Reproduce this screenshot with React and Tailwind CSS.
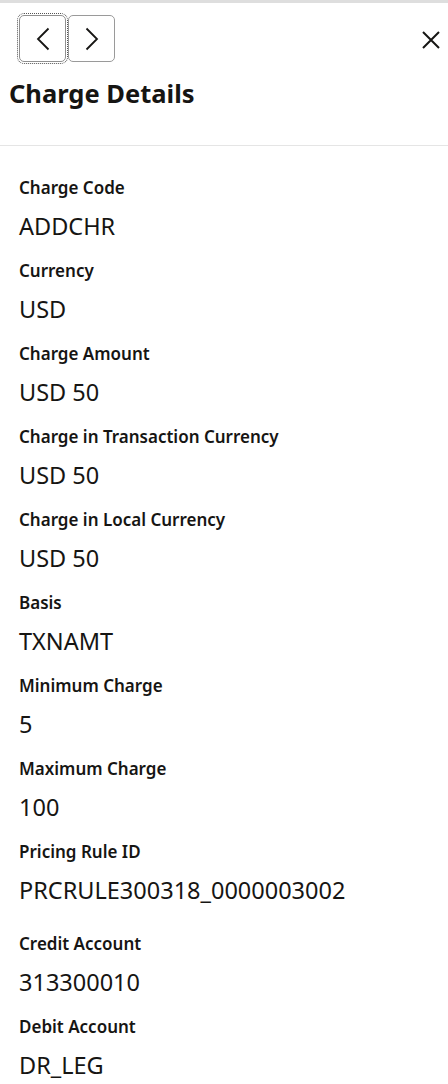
import React from "react";

const fields = [
    { label: "Charge Code", value: "ADDCHR" },
    { label: "Currency", value: "USD" },
    { label: "Charge Amount", value: "USD 50" },
    { label: "Charge in Transaction Currency", value: "USD 50" },
    { label: "Charge in Local Currency", value: "USD 50" },
    { label: "Basis", value: "TXNAMT" },
    { label: "Minimum Charge", value: "5" },
    { label: "Maximum Charge", value: "100" },
    { label: "Pricing Rule ID", value: "PRCRULE300318_0000003002" },
    { label: "Credit Account", value: "313300010", extra: true },
    { label: "Debit Account", value: "DR_LEG" },
];

export default function App() {
    return (
        <div className="w-[448px] min-h-[1084px] bg-white text-[#161513] font-['Noto_Sans',sans-serif] border-t-[3px] border-[#dedede] overflow-hidden">
            <div className="relative pt-[12px] pb-[36px] border-b border-[#e5e5e5]">
                <div className="flex pl-[19px] gap-[2px]">
                    <button className="w-[47px] h-[47px] flex items-center justify-center rounded-[5px] border border-[#8f8f8f] outline-1 outline-dotted outline-[#555] outline-offset-[1px]">
                        <svg width="14" height="24" viewBox="0 0 14 24" fill="none" stroke="#161513" strokeWidth="1.8">
                            <path d="M12.5 1.5 L2 12 L12.5 22.5" />
                        </svg>
                    </button>
                    <button className="w-[47px] h-[47px] flex items-center justify-center rounded-[5px] border border-[#9a9a9a]">
                        <svg width="14" height="24" viewBox="0 0 14 24" fill="none" stroke="#161513" strokeWidth="1.8">
                            <path d="M1.5 1.5 L12 12 L1.5 22.5" />
                        </svg>
                    </button>
                </div>
                <button className="absolute right-[5px] top-[25px] w-[24px] h-[24px] flex items-center justify-center">
                    <svg width="20" height="20" viewBox="0 0 20 20" fill="none" stroke="#161513" strokeWidth="2">
                        <path d="M2 2 L18 18 M18 2 L2 18" />
                    </svg>
                </button>
                <h1 className="pl-[9px] mt-[15px] text-[25.5px] leading-[32px] font-bold">Charge Details</h1>
            </div>
            <div className="px-[19px] pt-[30px]">
                {fields.map((f) => (
                    <div key={f.label} className={`pb-[18px] ${f.extra ? "pt-[9px]" : ""}`}>
                        <div className="text-[17px] leading-[24px] font-semibold">{f.label}</div>
                        <div className="mt-[11px] text-[23.5px] leading-[30px]">{f.value}</div>
                    </div>
                ))}
            </div>
        </div>
    );
}
